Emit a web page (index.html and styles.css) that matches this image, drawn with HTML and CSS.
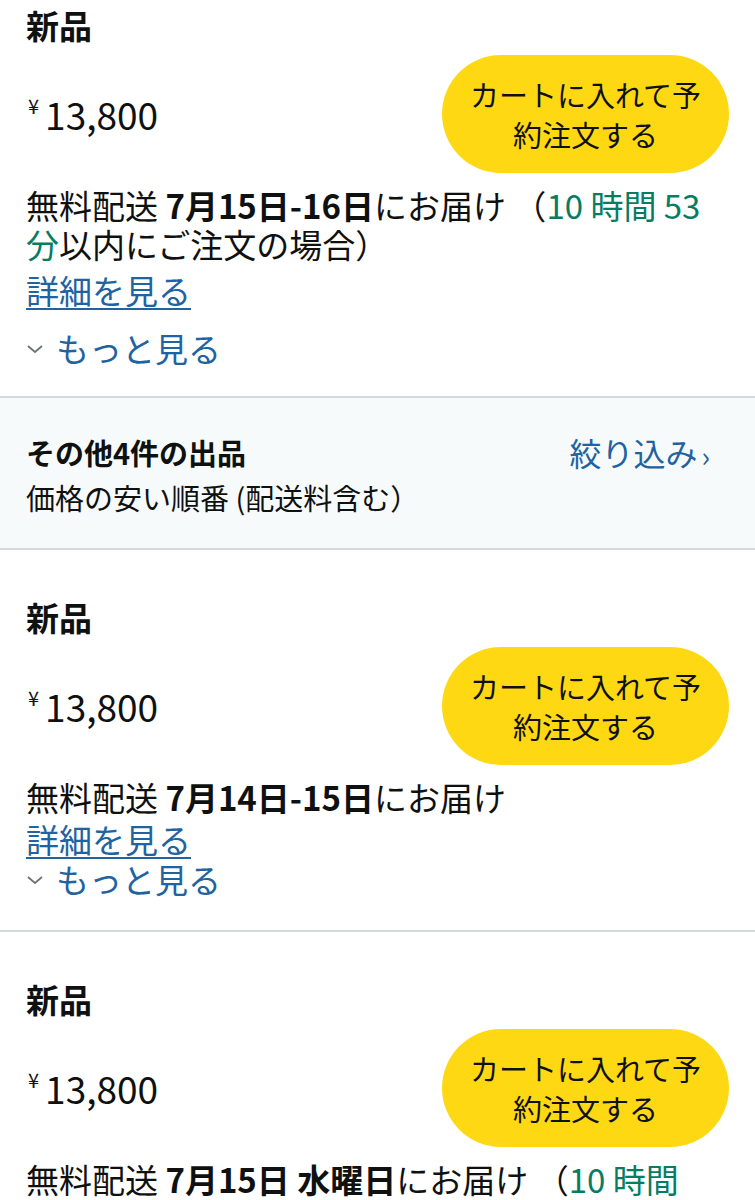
FILE: index.html
```html
<!DOCTYPE html>
<html lang="ja">
<head>
<meta charset="utf-8">
<link rel="stylesheet" href="styles.css">
</head>
<body>
<div class="page">
  <section class="offer offer-first">
    <h2 class="cond">新品</h2>
    <div class="buyrow">
      <div class="price"><span class="yen">¥</span><span class="amt">13,800</span></div>
      <button class="cart">カートに入れて予約注文する</button>
    </div>
    <p class="ship">無料配送 <b>7月15日-16日</b>にお届け （<span class="green">10 時間 53 分</span>以内にご注文の場合）</p>
    <a class="details details-first">詳細を見る</a>
    <div class="more more-first"><svg class="chev" width="18" height="10" viewBox="0 0 18 10"><polyline points="2,2 9,8 16,2" fill="none" stroke="#6f7373" stroke-width="1.8"/></svg><span>もっと見る</span></div>
  </section>

  <section class="others">
    <div class="others-text">
      <div class="others-title">その他4件の出品</div>
      <div class="others-sub">価格の安い順番 (配送料含む）</div>
    </div>
    <a class="filter">絞り込み<span class="arr">›</span></a>
  </section>

  <section class="offer">
    <h2 class="cond">新品</h2>
    <div class="buyrow">
      <div class="price"><span class="yen">¥</span><span class="amt">13,800</span></div>
      <button class="cart">カートに入れて予約注文する</button>
    </div>
    <p class="ship">無料配送 <b>7月14日-15日</b>にお届け</p>
    <a class="details">詳細を見る</a>
    <div class="more"><svg class="chev" width="18" height="10" viewBox="0 0 18 10"><polyline points="2,2 9,8 16,2" fill="none" stroke="#6f7373" stroke-width="1.8"/></svg><span>もっと見る</span></div>
  </section>

  <section class="offer offer-last">
    <h2 class="cond">新品</h2>
    <div class="buyrow">
      <div class="price"><span class="yen">¥</span><span class="amt">13,800</span></div>
      <button class="cart">カートに入れて予約注文する</button>
    </div>
    <p class="ship">無料配送 <b>7月15日 水曜日</b>にお届け （<span class="green">10 時間 53 分</span>以内にご注文の場合）</p>
  </section>
</div>
</body>
</html>
```

FILE: styles.css
```css
* { box-sizing: border-box; }
html, body { margin: 0; padding: 0; background: #fff; }
body {
  font-family: "Noto Sans CJK JP", "Noto Sans", sans-serif;
  color: #0f1111;
  overflow: hidden;
}
.page { width: 755px; }

.offer {
  padding: 47px 26px 32px 26px;
  border-bottom: 2px solid #d5d9d9;
}
.offer-first { padding-top: 5px; padding-bottom: 29px; }
.offer-last { border-bottom: none; }

.cond {
  margin: 0;
  font-size: 33px;
  line-height: 40px;
  font-weight: 700;
}

.buyrow {
  margin-top: 10px;
  display: flex;
  align-items: center;
  justify-content: space-between;
}
.price {
  display: flex;
  align-items: flex-start;
}
.yen {
  font-size: 20px;
  line-height: 24px;
  margin-top: 3px;
  margin-right: 6px;
  margin-left: 2px;
}
.amt {
  font-size: 37px;
  line-height: 46px;
}
.cart {
  width: 287px;
  height: 118px;
  border: none;
  border-radius: 60px;
  background: #ffd814;
  color: #0f1111;
  font-family: inherit;
  font-size: 29px;
  line-height: 40px;
  padding: 19px 26px;
  text-align: center;
}

.ship {
  margin: 13px 14px 0 0;
  font-size: 33px;
  line-height: 38.5px;
}
.ship b { font-weight: 700; }
.green { color: #067d62; }

.details {
  display: inline-block;
  margin-top: 8px;
  font-size: 33px;
  line-height: 38px;
  color: #2162a1;
  text-decoration: underline;
  text-underline-offset: 4px;
  text-decoration-thickness: 2px;
}
.offer:not(.offer-first) .details { margin-top: 3px; }

.more {
  display: flex;
  align-items: center;
  gap: 12px;
  margin-top: 2px;
  font-size: 33px;
  line-height: 38px;
  color: #2162a1;
}
.more-first { margin-top: 20px; }
.chev { margin-top: 2px; }

.others {
  background: #f7fafa;
  border-bottom: 2px solid #d5d9d9;
  height: 152px;
  padding: 0 26px;
  display: flex;
  align-items: center;
  justify-content: space-between;
}
.others-text { margin-top: 2px; }
.others-title {
  font-size: 29px;
  line-height: 40px;
  font-weight: 700;
}
.others-sub {
  font-size: 29px;
  line-height: 40px;
  margin-top: 5px;
}
.filter {
  align-self: flex-start;
  margin-top: 34px;
  margin-right: 19px;
  font-size: 32px;
  line-height: 40px;
  color: #2162a1;
}
.arr {
  font-size: 28px;
  margin-left: 4px;
  position: relative;
  top: 1px;
}
```
